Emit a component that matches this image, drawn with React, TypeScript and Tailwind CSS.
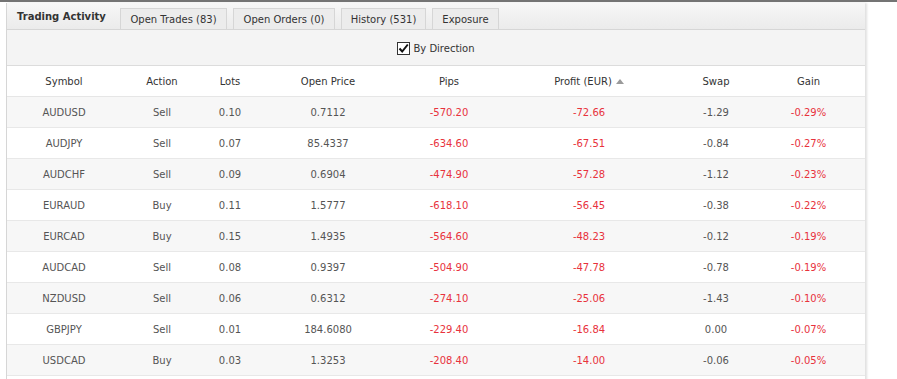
import React from "react";

const rows = [
  ["AUDUSD", "Sell", "0.10", "0.7112", "-570.20", "-72.66", "-1.29", "-0.29%"],
  ["AUDJPY", "Sell", "0.07", "85.4337", "-634.60", "-67.51", "-0.84", "-0.27%"],
  ["AUDCHF", "Sell", "0.09", "0.6904", "-474.90", "-57.28", "-1.12", "-0.23%"],
  ["EURAUD", "Buy", "0.11", "1.5777", "-618.10", "-56.45", "-0.38", "-0.22%"],
  ["EURCAD", "Buy", "0.15", "1.4935", "-564.60", "-48.23", "-0.12", "-0.19%"],
  ["AUDCAD", "Sell", "0.08", "0.9397", "-504.90", "-47.78", "-0.78", "-0.19%"],
  ["NZDUSD", "Sell", "0.06", "0.6312", "-274.10", "-25.06", "-1.43", "-0.10%"],
  ["GBPJPY", "Sell", "0.01", "184.6080", "-229.40", "-16.84", "0.00", "-0.07%"],
  ["USDCAD", "Buy", "0.03", "1.3253", "-208.40", "-14.00", "-0.06", "-0.05%"],
  ["", "", "", "", "", "", "", ""],
];

const headers = ["Symbol", "Action", "Lots", "Open Price", "Pips", "Profit (EUR)", "Swap", "Gain"];
const grid = "grid grid-cols-[114px_82px_54px_142px_100px_180px_74px_111px]";

export default function App() {
  return (
    <div
      className="w-[897px] h-[379px] bg-white overflow-hidden border-t-2 border-[#747474]"
      style={{ fontFamily: '"DejaVu Sans", Verdana, sans-serif' }}
    >
      <div className="mt-[1px] ml-[6px] w-[859px] h-[400px] border-l border-[#d6d6d6] bg-white shadow-[2px_0_2px_rgba(0,0,0,0.12)]">
        {/* Tab bar */}
        <div className="h-[27px] flex items-end border-b border-[#d6d6d6] bg-gradient-to-b from-[#f7f7f7] to-[#ebebeb]">
          <div className="w-[113px] h-full flex items-center pl-[10px] pt-[1px] text-[10px] font-bold text-[#333]">
            Trading Activity
          </div>
          <div className="flex gap-[6px]">
            {["Open Trades (83)", "Open Orders (0)", "History (531)", "Exposure"].map((t, i) => (
              <div
                key={t}
                className={
                  "h-[21px] flex items-center justify-center border border-b-0 border-[#d6d6d6] bg-[#ececec] text-[10px] text-[#333] " +
                  (i === 0 ? "w-[107px]" : i === 1 ? "w-[102px]" : i === 2 ? "w-[85px]" : "w-[67px]")
                }
              >
                {t}
              </div>
            ))}
          </div>
        </div>
        {/* Toolbar */}
        <div className="h-[36px] flex items-center justify-center bg-[#f4f4f4] border-b border-[#dcdcdc]">
          <div className="flex items-center gap-[3px] pt-[1px]">
            <div className="w-[13px] h-[13px] border border-[#333] bg-white flex items-center justify-center">
              <svg width="11" height="11" viewBox="0 0 11 11">
                <path d="M1.5 5.5 L4.2 8.5 L9.8 1.5" fill="none" stroke="#111" strokeWidth="2" />
              </svg>
            </div>
            <span className="text-[10px] text-[#333]">By Direction</span>
          </div>
        </div>
        {/* Header */}
        <div className={grid + " h-[31px] items-center border-b border-[#e6e6e6] bg-white text-[10px] text-[#333]"}>
          {headers.map((h, i) => (
            <div key={h} className="text-center">
              {h}
              {i === 5 && (
                <svg className="inline-block ml-[4px] mb-[1px]" width="8" height="5" viewBox="0 0 8 5">
                  <path d="M0 5 L4 0 L8 5 Z" fill="#9a9a9a" />
                </svg>
              )}
            </div>
          ))}
        </div>
        {/* Rows */}
        {rows.map((r, ri) => (
          <div
            key={ri}
            className={
              grid +
              " h-[31px] items-center border-b border-[#e8e8e8] text-[10px] " +
              (ri % 2 === 0 ? "bg-[#f7f7f7]" : "bg-white")
            }
          >
            {r.map((c, ci) => (
              <div
                key={ci}
                className={"text-center " + (ci === 4 || ci === 5 || ci === 7 ? "text-[#e8323c]" : "text-[#555]")}
              >
                {c}
              </div>
            ))}
          </div>
        ))}
      </div>
    </div>
  );
}
